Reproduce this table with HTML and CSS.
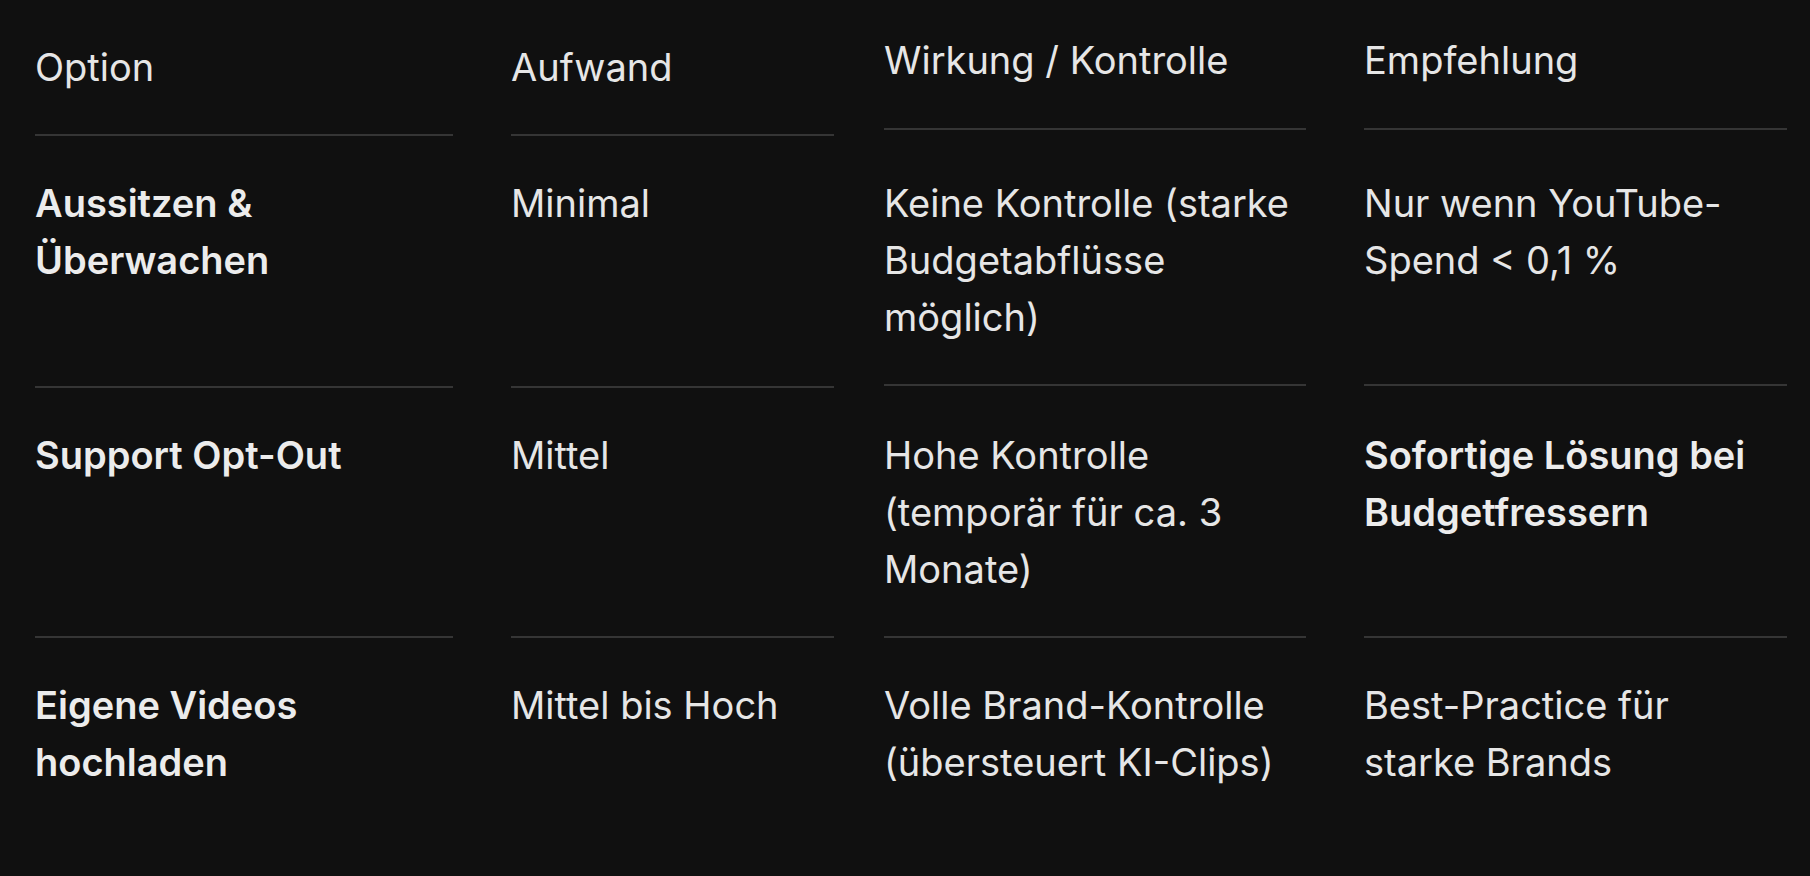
FILE: index.html
```html
<!DOCTYPE html>
<html lang="de">
<head>
<meta charset="utf-8">
<title>Optionen</title>
<link rel="stylesheet" href="styles.css">
</head>
<body>
<div class="table">
  <div class="cell head c1">Option</div>
  <div class="cell head c2">Aufwand</div>
  <div class="cell head c3 shift">Wirkung / Kontrolle</div>
  <div class="cell head c4 shift">Empfehlung</div>

  <div class="cell c1 strong">Aussitzen &amp; Überwachen</div>
  <div class="cell c2">Minimal</div>
  <div class="cell c3 lift">Keine Kontrolle (starke Budgetabflüsse möglich)</div>
  <div class="cell c4 lift">Nur wenn YouTube-Spend &lt; 0,1&nbsp;%</div>

  <div class="cell c1 strong">Support Opt-Out</div>
  <div class="cell c2">Mittel</div>
  <div class="cell c3">Hohe Kontrolle (temporär für ca. 3 Monate)</div>
  <div class="cell c4 strong">Sofortige Lösung bei Budgetfressern</div>

  <div class="cell last c1 strong">Eigene Videos hochladen</div>
  <div class="cell last c2">Mittel bis Hoch</div>
  <div class="cell last c3">Volle Brand-Kontrolle (übersteuert KI-Clips)</div>
  <div class="cell last c4">Best-Practice für starke Brands</div>
</div>
</body>
</html>
```

FILE: styles.css
```css
html, body {
  margin: 0;
  padding: 0;
  background: #101010;
}

body {
  width: 1810px;
  height: 876px;
  overflow: hidden;
  font-family: "Inter", "Roboto", sans-serif;
  color: #e6e6e6;
}

.table {
  display: grid;
  grid-template-columns: 426px 323px 430px 423px;
  column-gap: 50px;
  padding-left: 35px;
}

.cell {
  font-size: 38px;
  line-height: 57px;
  padding: 39px 0 38px;
  border-bottom: 2px solid #353535;
}

.cell.last {
  border-bottom: none;
}

.c1, .c3 {
  margin-right: 8px;
}

.c4 {
  padding-right: 18px;
}

.strong {
  font-weight: 600;
  color: #ececec;
}

.head.shift {
  padding-top: 32px;
  margin-bottom: 6px;
}

.lift {
  margin-bottom: 2px;
}
```
